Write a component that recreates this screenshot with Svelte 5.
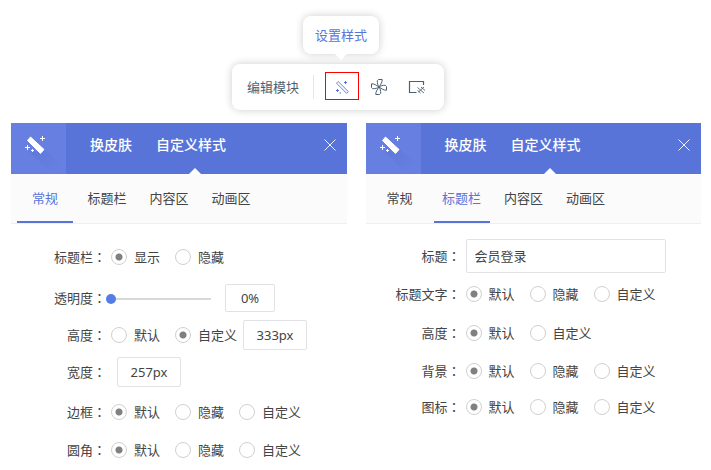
<script>
  const tabs = ['常规', '标题栏', '内容区', '动画区'];

  const panels = [
    {
      id: 'general',
      active: 0,
      rows: [
        { label: '标题栏', options: ['显示', '隐藏'], checked: 0 },
        { label: '透明度', slider: true, value: '0%', size: 'tall' },
        { label: '高度', options: ['默认', '自定义'], checked: 1, value: '333px', size: 'short' },
        { label: '宽度', value: '257px', indent: true, size: 'field' },
        { label: '边框', options: ['默认', '隐藏', '自定义'], checked: 0 },
        { label: '圆角', options: ['默认', '隐藏', '自定义'], checked: 0 }
      ]
    },
    {
      id: 'title',
      active: 1,
      rows: [
        { label: '标题', text: '会员登录', size: 'short' },
        { label: '标题文字', options: ['默认', '隐藏', '自定义'], checked: 0, size: 'tall' },
        { label: '高度', options: ['默认', '自定义'], checked: 0 },
        { label: '背景', options: ['默认', '隐藏', '自定义'], checked: 0 },
        { label: '图标', options: ['默认', '隐藏', '自定义'], checked: 0, size: 'last' }
      ]
    }
  ];
</script>

<main>
  <div class="toolbar">
    <span class="tip">设置样式</span>
    <button class="edit" type="button">编辑模块</button>
    <span class="divider"></span>
    <button class="tool selected" type="button" aria-label="设置样式">
      <svg width="14" height="14" viewBox="0 0 14 14" fill="none" stroke="#5874d8">
        <path stroke-width=".9" d="M1.500 3.200 3.200 1.500 13.300 11.600 11.600 13.300Z" />
        <path d="M9 2.500h3M10.500 1v3M1 10.500h3M2.500 9v3M4.500 13h1.500" />
      </svg>
    </button>
    <button class="tool" type="button" aria-label="动画">
      <svg width="18" height="18" viewBox="-9 -9 18 18" fill="none" stroke="#4f5f70" stroke-linejoin="round">
        {#each [0, 90, 180, 270] as angle}
          <path transform="rotate({angle})" d="M0 0C-1.200-1.500-1.800-4-1.700-6.300L-.5-7.500H3.200C3.400-5 2-3 0 0Z" />
        {/each}
      </svg>
    </button>
    <button class="tool" type="button" aria-label="背景">
      <svg width="18" height="14" viewBox="0 0 18 14" fill="none" stroke="#4f5f70">
        <path stroke-width="1.200" d="M8.500 12.500H1.500V1.500H15.500V5" />
        <path d="M9.500 7.500l6.500 5.500M13 7l4 3.500M9.500 10.500l3 2.500M16 7l-5.500 5" stroke-width=".9" />
      </svg>
    </button>
  </div>

  <div class="panels">
    {#each panels as panel}
      <section class="panel">
        <header>
          <div class="logo">
            <svg width="55" height="51" viewBox="0 0 55 51">
              <defs>
                <linearGradient id="shade-{panel.id}" x1="0" y1="0" x2="1" y2="1">
                  <stop offset="0" stop-color="#526cce" stop-opacity=".8" />
                  <stop offset=".85" stop-color="#526cce" stop-opacity="0" />
                </linearGradient>
              </defs>
              <path d="M20 14 53 43 48 50H40L18 28 30 29Z" fill="url(#shade-{panel.id})" opacity=".6" />
              <path d="M19.500 14 33 26.500 29.500 30.500 16.500 17.500Z" fill="#fff" stroke="#fff" stroke-linejoin="round" />
              <path d="M29 15.500h5M31.500 13v5M14 24.500h5M16.500 22v5M20 27.500h3M21.500 26v3" stroke="#fff" />
            </svg>
          </div>
          <nav>
            <a href="#skin-{panel.id}">换皮肤</a>
            <a class="current" href="#style-{panel.id}">自定义样式</a>
          </nav>
          <button class="close" type="button" aria-label="关闭">
            <svg width="12" height="12" viewBox="0 0 12 12" stroke="#fff">
              <path stroke-width=".9" d="M.5.5l11 11M11.500.5l-11 11" />
            </svg>
          </button>
        </header>

        <div class="tabs" role="tablist">
          {#each tabs as tab, i}
            <button type="button" role="tab" aria-selected={i === panel.active} class:active={i === panel.active}>{tab}</button>
          {/each}
        </div>

        <form>
          {#each panel.rows as row, r}
            {@const name = `${panel.id}-${r}`}
            <div class="row {row.size ?? ''}" class:text={row.text} role="group" aria-labelledby="{name}-label">
              <label class="name" id="{name}-label" for="{name}-field">{row.label}<span class="colon" lang="zh-TW">：</span></label>
              {#if row.options}
                {#each row.options as option, i}
                  <label class="option">
                    <input type="radio" {name} id={i === 0 ? `${name}-field` : undefined} checked={i === row.checked} />
                    {option}
                  </label>
                {/each}
              {/if}
              {#if row.slider}
                <input class="slider" type="range" id="{name}-field" min="0" max="100" value="0" />
              {/if}
              {#if row.text}
                <input class="title" type="text" id="{name}-field" value={row.text} />
              {/if}
              {#if row.value}
                <input
                  class="value"
                  class:small={row.slider}
                  class:indent={row.indent}
                  type="text"
                  id={row.indent ? `${name}-field` : `${name}-value`}
                  aria-label="{row.label}数值"
                  value={row.value}
                />
              {/if}
            </div>
          {/each}
        </form>
      </section>
    {/each}
  </div>
</main>

<style>
  :global(body) {
    background: #fff;
  }

  main {
    padding: 64px 10px 0 11px;
    font: 13px/20px 'Noto Sans', 'Noto Sans CJK SC', sans-serif;
    color: #444;
  }

  button,
  input {
    box-sizing: border-box;
    margin: 0;
    padding: 0;
    border: 0;
    background: none;
    font: inherit;
    color: inherit;
  }

  svg {
    display: block;
  }

  .toolbar {
    position: relative;
    display: flex;
    align-items: center;
    box-sizing: border-box;
    width: max-content;
    height: 46px;
    margin-left: 221px;
    padding: 0 8px 0 15px;
    border-radius: 8px;
    background: #fff;
    box-shadow: 0 0 8px rgba(0, 0, 0, 0.2);
  }

  .edit {
    color: #4f5f70;
  }

  .divider {
    width: 1px;
    height: 24px;
    margin: 0 11px 0 14px;
    background: #e6e6e6;
  }

  .tool {
    display: flex;
    align-items: center;
    justify-content: center;
    width: 38px;
    height: 28px;
  }

  .tool.selected {
    width: 34px;
    margin: 0 1px 2px 0;
    padding-top: 2px;
    border: 1px solid #f00;
  }

  .tip {
    position: absolute;
    left: 71px;
    bottom: 56px;
    padding: 9px 12px;
    border-radius: 8px;
    background: #fff;
    color: #5874d8;
    box-shadow: 0 0 8px rgba(0, 0, 0, 0.2);
  }

  .tip::after {
    content: '';
    position: absolute;
    left: 50%;
    top: 100%;
    margin-left: -6px;
    border: 6px solid transparent;
    border-top-color: #fff;
    border-bottom: 0;
  }

  .panels {
    display: grid;
    grid-template-columns: 1fr 1fr;
    gap: 19px;
    margin-top: 13px;
  }

  header {
    display: flex;
    height: 51px;
    background: #5874d8;
    color: #fff;
  }

  .logo {
    width: 55px;
    background: #667fe0;
  }

  nav {
    display: flex;
    flex: 1;
    gap: 24px;
    padding-left: 24px;
    font-size: 14px;
    font-weight: 500;
    line-height: 44px;
  }

  nav a {
    position: relative;
    color: inherit;
    text-decoration: none;
    white-space: nowrap;
  }

  .current::after {
    content: '';
    position: absolute;
    left: 33px;
    bottom: 0;
    border: 6px solid transparent;
    border-bottom-color: #fff;
    border-top: 0;
  }

  .close {
    height: 44px;
    padding: 0 11px;
  }

  .tabs {
    display: flex;
    gap: 6px;
    height: 49px;
    padding: 0 6px;
    border-bottom: 1px solid #efefef;
    background: #fbfbfb;
  }

  .tabs button {
    width: 56px;
    border: solid transparent;
    border-width: 0 0 2px;
  }

  .tabs .active {
    border-bottom-color: #5874d8;
    color: #5874d8;
  }

  form {
    padding-top: 14px;
  }

  .row {
    display: flex;
    align-items: center;
    height: 38px;
  }

  .row.tall {
    height: 43px;
  }

  .row.short {
    height: 32px;
  }

  .row.short.text {
    height: 35px;
  }

  .row.text + .tall {
    height: 41px;
  }

  .row.field {
    height: 42px;
  }

  .row.last {
    height: 34px;
  }

  .name {
    width: 95px;
    margin-right: 5px;
    text-align: right;
  }

  .colon {
    font-family: 'Noto Sans CJK TC', sans-serif;
  }

  .option {
    display: flex;
    align-items: center;
    gap: 7px;
    margin-right: 15px;
    white-space: nowrap;
  }

  .option:has(+ .value) {
    margin-right: 6px;
  }

  .option input {
    appearance: none;
    width: 16px;
    height: 16px;
    border: 1px solid #d0d0d0;
    border-radius: 50%;
  }

  .option input:checked {
    background: radial-gradient(circle, #808080 3px, transparent 4px);
  }

  .slider {
    appearance: none;
    width: 105px;
    height: 10px;
    margin: 2px 14px 0 -5px;
    background: linear-gradient(#d8d8d8, #d8d8d8) center / 100% 2px no-repeat;
  }

  .slider::-webkit-slider-thumb {
    appearance: none;
    width: 10px;
    height: 10px;
    border-radius: 50%;
    background: #557de6;
  }

  .value,
  .title {
    border: 1px solid #e2e2e6;
    border-radius: 2px;
    background: #fff;
  }

  .value {
    width: 64px;
    height: 30px;
    text-align: center;
  }

  .value.small {
    width: 50px;
    height: 28px;
  }

  .value.indent {
    margin-left: 6px;
  }

  .title {
    width: 200px;
    height: 34px;
    padding: 0 8px;
  }
</style>
